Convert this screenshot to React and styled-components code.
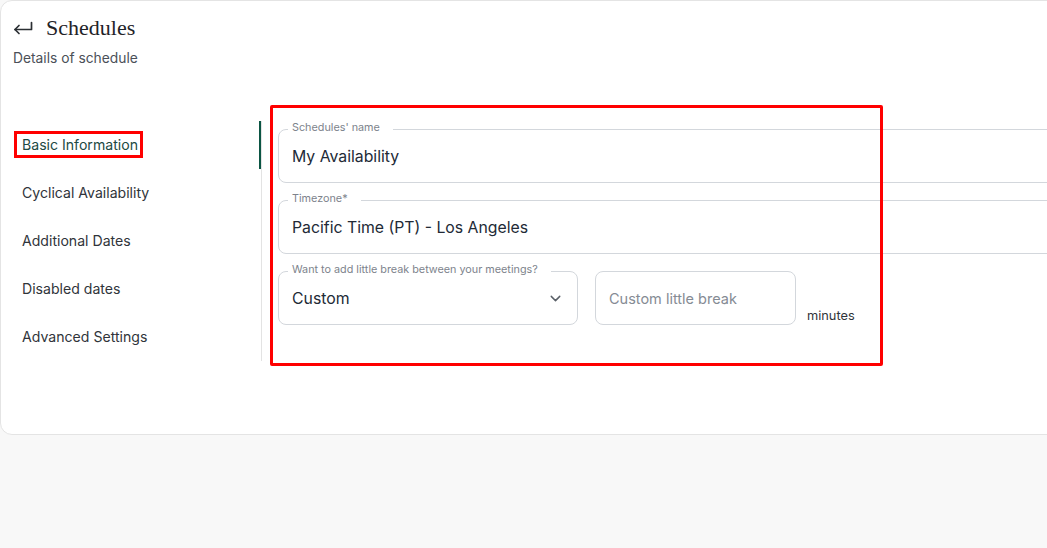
import React from "react";
import styled, { createGlobalStyle } from "styled-components";
import { ChevronDown } from "lucide-react";

const GlobalStyle = createGlobalStyle`
  html, body {
    margin: 0;
    padding: 0;
    background: #f8f8f8;
    overflow: hidden;
    font-family: Inter, "Noto Sans", Arial, sans-serif;
  }
  * {
    box-sizing: border-box;
  }
`;

const Card = styled.div`
  width: 1120px;
  background: #ffffff;
  border: 1px solid #e4e4e4;
  border-radius: 12px;
  padding: 15px 12px 73px 11px;
`;

const TitleRow = styled.div`
  display: flex;
  align-items: center;
  gap: 12px;
  height: 24px;
`;

const BackButton = styled.button`
  display: flex;
  align-items: center;
  justify-content: center;
  width: 22px;
  height: 24px;
  padding: 0;
  border: none;
  background: none;
  color: #2b2f33;
  cursor: pointer;
`;

const Title = styled.h1`
  margin: 0;
  font-family: "Liberation Serif", "DejaVu Serif", serif;
  font-size: 22px;
  font-weight: 400;
  color: #1f2328;
`;

const Subtitle = styled.p`
  margin: 9px 0 0 1px;
  font-size: 13.8px;
  line-height: 18px;
  color: #4b5058;
`;

const Body = styled.div`
  display: flex;
  margin-top: 54px;
`;

const Sidebar = styled.nav`
  width: 250px;
  flex-shrink: 0;
  border-right: 1px solid #e3e3e3;
`;

const NavItem = styled.div`
  height: 48px;
  display: flex;
  align-items: center;
  padding: 0 0 2px 10px;
  font-size: 14.1px;
  color: ${(p) => (p.$active ? "#1d4a44" : "#30343a")};
  box-shadow: ${(p) => (p.$active ? "inset -2px 0 0 #0b5543" : "none")};
  cursor: pointer;
`;

const Marked = styled.span`
  padding-left: 3px;
  margin-left: -3px;
  outline: 3px solid #ff0000;
  outline-offset: 2px;
`;

const Form = styled.div`
  position: relative;
  flex: 1;
  display: flex;
  flex-direction: column;
  gap: 17px;
  margin-left: 16px;
  padding-top: 8px;
`;

const Annotation = styled.div`
  position: absolute;
  left: -8px;
  top: -16px;
  width: 613px;
  height: 261px;
  border: 3px solid #ff0000;
  border-radius: 2px;
  pointer-events: none;
`;

const Field = styled.div`
  position: relative;
  display: flex;
  align-items: center;
  width: ${(p) => p.$width || "100%"};
  height: 54px;
  padding: 1px 13px 0;
  border: 1px solid #d3d7dc;
  border-radius: 8px;
`;

const Legend = styled.span`
  position: absolute;
  top: -8px;
  left: 9px;
  padding: 0 13px 0 4px;
  background: #ffffff;
  font-size: 10.8px;
  line-height: 12px;
  color: #7d838c;
  white-space: nowrap;
`;

const Value = styled.span`
  flex: 1;
  font-size: 15.8px;
  color: #222a36;
`;

const Placeholder = styled.span`
  flex: 1;
  font-size: 14.5px;
  color: #858b94;
`;

const Row = styled.div`
  display: flex;
  align-items: flex-end;
  gap: 17px;
`;

const Unit = styled.span`
  margin-left: -6px;
  margin-bottom: 1px;
  font-size: 12.8px;
  line-height: 16px;
  color: #30343a;
`;

const BackIcon = () => (
  <svg width="20" height="14" viewBox="0 0 20 14" fill="none" stroke="currentColor" strokeWidth="1.7" strokeLinecap="round" strokeLinejoin="round">
    <path d="M18.5 1.5V8.5H2" />
    <polyline points="6,4.5 2,8.5 6,12.5" />
  </svg>
);

const navItems = [
  "Basic Information",
  "Cyclical Availability",
  "Additional Dates",
  "Disabled dates",
  "Advanced Settings",
];

export default function App() {
  return (
    <>
      <GlobalStyle />
      <Card>
        <TitleRow>
          <BackButton aria-label="Back">
            <BackIcon />
          </BackButton>
          <Title>Schedules</Title>
        </TitleRow>
        <Subtitle>Details of schedule</Subtitle>
        <Body>
          <Sidebar>
            {navItems.map((item, i) => (
              <NavItem key={item} $active={i === 0}>
                {i === 0 ? <Marked>{item}</Marked> : item}
              </NavItem>
            ))}
          </Sidebar>
          <Form>
            <Field>
              <Legend>Schedules' name</Legend>
              <Value>My Availability</Value>
            </Field>
            <Field>
              <Legend>Timezone*</Legend>
              <Value>Pacific Time (PT) - Los Angeles</Value>
            </Field>
            <Row>
              <Field $width="300px">
                <Legend>Want to add little break between your meetings?</Legend>
                <Value>Custom</Value>
                <ChevronDown size={17} strokeWidth={2} color="#5a6068" />
              </Field>
              <Field $width="201px">
                <Placeholder>Custom little break</Placeholder>
              </Field>
              <Unit>minutes</Unit>
            </Row>
            <Annotation />
          </Form>
        </Body>
      </Card>
    </>
  );
}
